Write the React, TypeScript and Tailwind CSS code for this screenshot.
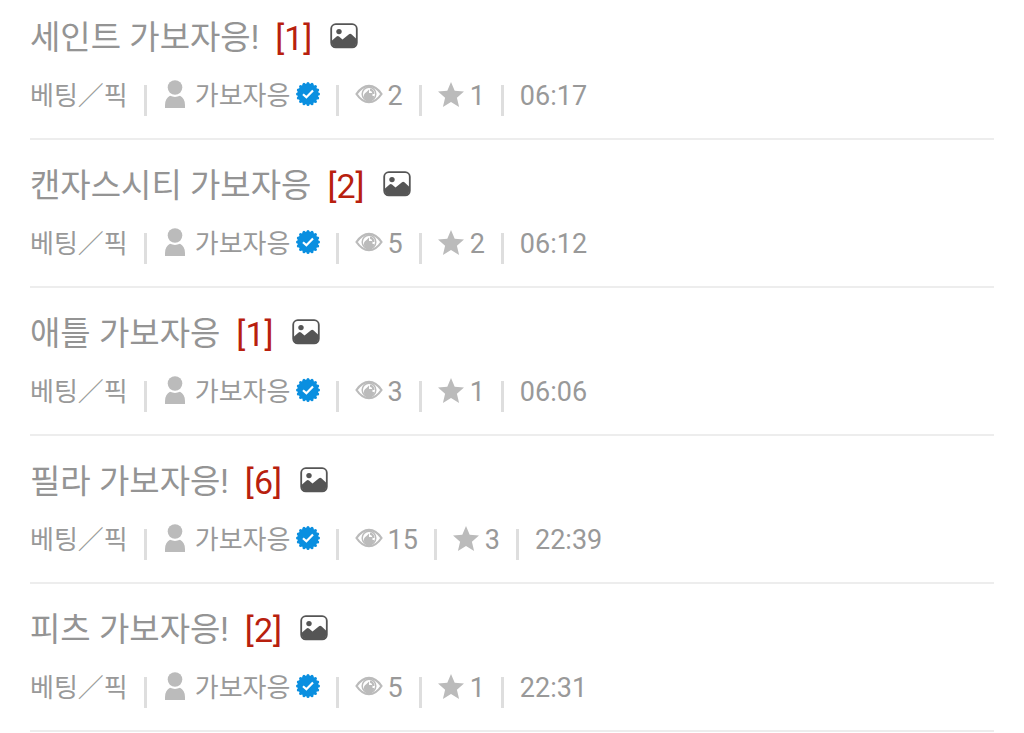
interface Post {
  id: number;
  title: string;
  comments: number;
  views: number;
  likes: number;
  time: string;
}

const POSTS: Post[] = [
  { id: 1, title: "세인트 가보자응!", comments: 1, views: 2, likes: 1, time: "06:17" },
  { id: 2, title: "캔자스시티 가보자응", comments: 2, views: 5, likes: 2, time: "06:12" },
  { id: 3, title: "애틀 가보자응", comments: 1, views: 3, likes: 1, time: "06:06" },
  { id: 4, title: "필라 가보자응!", comments: 6, views: 15, likes: 3, time: "22:39" },
  { id: 5, title: "피츠 가보자응!", comments: 2, views: 5, likes: 1, time: "22:31" },
];

function ImageIcon() {
  return (
    <svg viewBox="0 0 28 26" className="h-[26px] w-7 shrink-0" aria-label="이미지 첨부">
      <rect x="1.2" y="1.2" width="25.6" height="23.2" rx="4.6" fill="#fff" stroke="#555" strokeWidth="1.8" />
      <circle cx="9" cy="8.6" r="2.7" fill="#555" />
      <path
        d="M2 17.6 6.600 13.4Q7.800 12.400 9 13.4L12.500 16.400 19 11.200Q20.200 10.200 21.400 11.200L26 15.400V20.500Q26 24 22.500 24H5.500Q2 24 2 20.500Z"
        fill="#555"
      />
    </svg>
  );
}

function UserIcon() {
  return (
    <svg viewBox="0 0 20 28" className="mb-1 h-7 w-5 shrink-0" fill="#bbb" aria-hidden="true">
      <circle cx="10" cy="7.500" r="7.300" />
      <path d="M0 28V25C0 20.500 2 17.500 5 15.800Q10 18 15 15.800C18 17.500 20 20.500 20 25V28Z" />
    </svg>
  );
}

function VerifiedIcon() {
  // 16 rounded teeth around the disc
  const teeth = Array.from({ length: 16 }, (_, i) => (i * Math.PI) / 8);
  return (
    <svg viewBox="0 0 24 24" className="mb-1 h-6 w-6 shrink-0" aria-label="인증 회원">
      <g fill="#0a8fe0">
        <circle cx="12" cy="12" r="10.600" />
        {teeth.map((a) => (
          <circle key={a} cx={12 + 10.5 * Math.cos(a)} cy={12 + 10.5 * Math.sin(a)} r="1.500" />
        ))}
      </g>
      <path d="M7 12.200 10.400 15.300 17 8.600" fill="none" stroke="#fff" strokeWidth="2.200" />
    </svg>
  );
}

function EyeIcon() {
  return (
    <svg viewBox="0 0 28 20" className="mb-1 h-5 w-7 shrink-0" fill="none" stroke="#bbb" aria-label="조회">
      <path d="M1.500 10Q7 1.800 14 1.800T26.500 10Q21 18.200 14 18.200T1.500 10Z" strokeWidth="2.200" />
      <circle cx="14" cy="10" r="6.800" strokeWidth="1.500" />
      <path d="M14 5.500V9H17.500V12H19A5 5 0 1 1 11.500 8Z" fill="#bbb" stroke="none" />
      <path d="M15 5.500Q18.500 6.500 18.500 10" strokeWidth="2" />
    </svg>
  );
}

function StarIcon() {
  return (
    <svg viewBox="0 0 26 25" className="mb-1 h-[25px] w-[26px] shrink-0" fill="#bbb" aria-label="추천">
      <path d="M13 0 16.700 8.800 26 9.600 18.900 15.700 21.100 25 13 20 4.900 25 7.100 15.700 0 9.600 9.300 8.800Z" />
    </svg>
  );
}

function Divider() {
  return <span className="mt-2 h-[31px] w-[3px] shrink-0 bg-[#dedede]" aria-hidden="true" />;
}

function PostItem({ post }: { post: Post }) {
  return (
    <li className="border-b-2 border-[#ededed] pt-[26px] pb-6 first:pt-[18px]">
      <a href={`#post-${post.id}`} className="flex h-10 items-center whitespace-nowrap">
        <span className="text-[33px] text-[#949494]">{post.title}</span>
        <span className="ml-4 text-[34px] text-[#b8200e]">[{post.comments}]</span>
        <span className="ml-[18px] pb-1">
          <ImageIcon />
        </span>
      </a>
      <div className="mt-5 flex h-9 items-center gap-4 whitespace-nowrap text-[27px] text-[#999]">
        <a href="#betting" className="text-[26px]">
          베팅／픽
        </a>
        <Divider />
        <span className="ml-0.5 flex items-center">
          <UserIcon />
          <a href="#member" className="ml-[10px] text-[26px]">
            가보자응
          </a>
          <span className="ml-[6px]">
            <VerifiedIcon />
          </span>
        </span>
        <Divider />
        <span className="flex items-center gap-1">
          <EyeIcon />
          {post.views}
        </span>
        <Divider />
        <span className="flex items-center gap-[6px]">
          <StarIcon />
          {post.likes}
        </span>
        <Divider />
        <time>{post.time}</time>
      </div>
    </li>
  );
}

export default function App() {
  return (
    <main className="overflow-hidden bg-white px-[30px] font-['Roboto','Noto_Sans_CJK_KR',sans-serif]">
      <ul>
        {POSTS.map((post) => (
          <PostItem key={post.id} post={post} />
        ))}
      </ul>
    </main>
  );
}
